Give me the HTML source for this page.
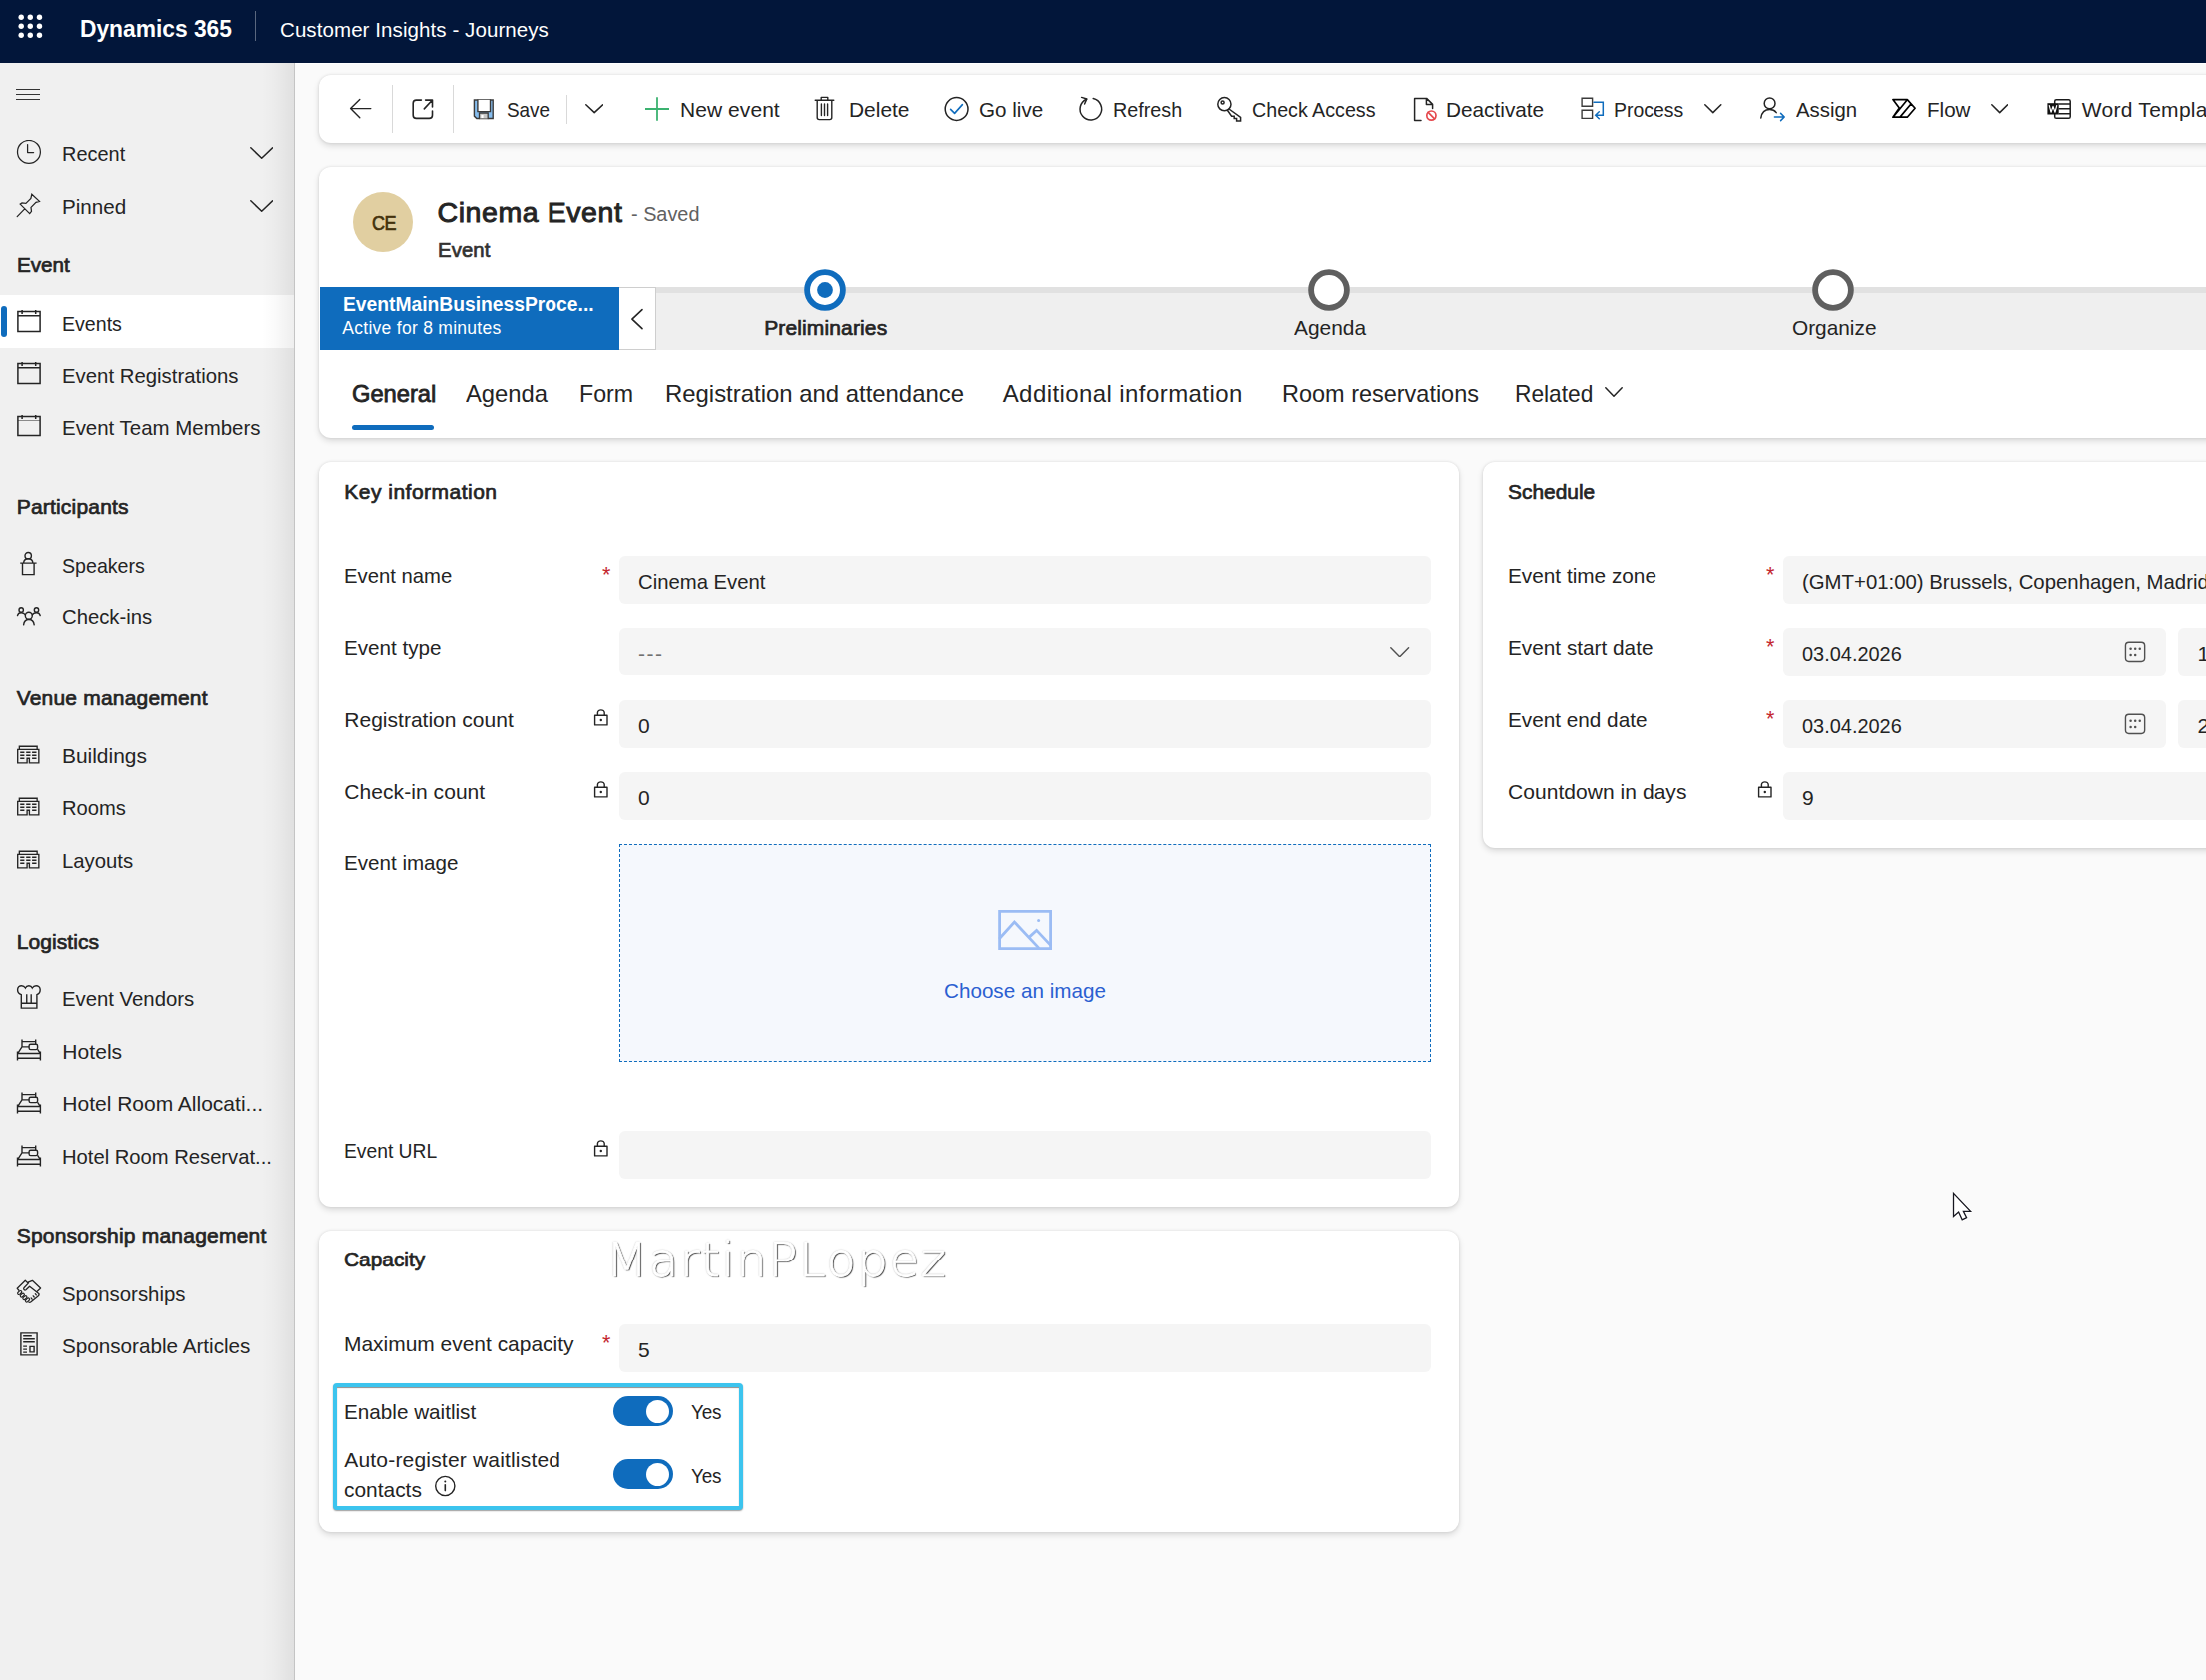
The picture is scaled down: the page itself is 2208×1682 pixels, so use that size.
<!DOCTYPE html><html lang="en"><head><meta charset="utf-8"><title>Event: Cinema Event - Dynamics 365</title><style>
*{box-sizing:border-box;margin:0;padding:0}
html,body{width:2208px;height:1682px;overflow:hidden;background:#fafafa}
body{position:relative;font-family:"Liberation Sans", sans-serif;color:#242424}
#root{position:absolute;left:0;top:0;width:2208px;height:1682px;overflow:hidden}
#root>div,#root>svg,#root>span{position:absolute}
#root>span{white-space:nowrap;line-height:1;display:block;transform-origin:0 50%}
</style></head><body><div id="root">
<div style="left:0px;top:0px;width:2208px;height:63px;background:#02163a;"></div>
<div style="left:295px;top:63px;width:1913px;height:1px;background:#fff;"></div>
<div style="left:0px;top:63px;width:294px;height:1619px;background:#f0f0f0;"></div>
<div style="left:0px;top:295px;width:294px;height:53px;background:#fff;"></div>
<div style="left:262px;top:63px;width:32px;height:1619px;background:linear-gradient(90deg,rgba(0,0,0,0),rgba(0,0,0,.02) 40%,rgba(0,0,0,.065));"></div>
<div style="left:294px;top:63px;width:1px;height:1619px;background:#c4c4c4;"></div>
<div style="left:1px;top:306px;width:6px;height:31px;background:#0f6cbd;border-radius:3px;"></div>
<svg style="left:0px;top:0px;" width="60" height="60" viewBox="0 0 60 60" fill="none" stroke-linecap="round" stroke-linejoin="round"><circle cx="21.2" cy="17.2" r="2.7" fill="#fff"/><circle cx="21.2" cy="26.2" r="2.7" fill="#fff"/><circle cx="21.2" cy="35.2" r="2.7" fill="#fff"/><circle cx="30.3" cy="17.2" r="2.7" fill="#fff"/><circle cx="30.3" cy="26.2" r="2.7" fill="#fff"/><circle cx="30.3" cy="35.2" r="2.7" fill="#fff"/><circle cx="39.5" cy="17.2" r="2.7" fill="#fff"/><circle cx="39.5" cy="26.2" r="2.7" fill="#fff"/><circle cx="39.5" cy="35.2" r="2.7" fill="#fff"/></svg>
<div style="left:255px;top:11px;width:1px;height:30px;background:rgba(255,255,255,.35);"></div>
<div style="left:15.7px;top:89px;width:24.6px;height:1px;background:#333;"></div>
<div style="left:15.7px;top:94px;width:24.6px;height:1px;background:#333;"></div>
<div style="left:15.7px;top:99px;width:24.6px;height:1px;background:#333;"></div>
<svg style="left:16px;top:140px;" width="26" height="26" viewBox="0 0 26 26" fill="none" stroke-linecap="round" stroke-linejoin="round"><circle cx="12.95" cy="11.9" r="11.45" stroke="#242424" stroke-width="1.25"/><path d="M11.6 4.6 V12.6 H17.6" stroke="#242424" stroke-width="1.25"/></svg>
<svg style="left:249.5px;top:147px;" width="23.4" height="12.2" viewBox="0 0 23.4 12.2" fill="none" stroke-linecap="round" stroke-linejoin="round"><path d="M0.8 0.8 L11.7 11.2 L22.599999999999998 0.8" stroke="#242424" stroke-width="1.5"/></svg>
<svg style="left:16px;top:193px;" width="26" height="26" viewBox="0 0 26 26" fill="none" stroke-linecap="round" stroke-linejoin="round"><path d="M4.2 11.1 L13.7 20.6 L15.5 18.4 L15 14.4 L20 9.4 L23.5 8.4 L15.8 1.3 L14.9 5.4 L9.9 10.4 L6 10 Z M8.7 15.9 L1.2 23.6" stroke="#242424" stroke-width="1.25" stroke-linejoin="miter"/></svg>
<svg style="left:249.5px;top:200px;" width="23.4" height="12.2" viewBox="0 0 23.4 12.2" fill="none" stroke-linecap="round" stroke-linejoin="round"><path d="M0.8 0.8 L11.7 11.2 L22.599999999999998 0.8" stroke="#242424" stroke-width="1.5"/></svg>
<svg style="left:16px;top:309.3px;" width="26" height="24" viewBox="0 0 26 24" fill="none" stroke-linecap="round" stroke-linejoin="round"><path d="M1.9 2.6 H24.1 V22.4 H1.9 Z M1.9 6.8 H24.1 M6.1 0.9 V5 M19.7 0.9 V5" stroke="#242424" stroke-width="1.5" stroke-linejoin="miter" stroke-linecap="butt"/></svg>
<svg style="left:16px;top:361.3px;" width="26" height="24" viewBox="0 0 26 24" fill="none" stroke-linecap="round" stroke-linejoin="round"><path d="M1.9 2.6 H24.1 V22.4 H1.9 Z M1.9 6.8 H24.1 M6.1 0.9 V5 M19.7 0.9 V5" stroke="#242424" stroke-width="1.5" stroke-linejoin="miter" stroke-linecap="butt"/></svg>
<svg style="left:16px;top:414px;" width="26" height="24" viewBox="0 0 26 24" fill="none" stroke-linecap="round" stroke-linejoin="round"><path d="M1.9 2.6 H24.1 V22.4 H1.9 Z M1.9 6.8 H24.1 M6.1 0.9 V5 M19.7 0.9 V5" stroke="#242424" stroke-width="1.5" stroke-linejoin="miter" stroke-linecap="butt"/></svg>
<svg style="left:16px;top:552px;" width="26" height="26" viewBox="0 0 26 26" fill="none" stroke-linecap="round" stroke-linejoin="round"><circle cx="12.2" cy="4.7" r="3.2" stroke="#242424" stroke-width="1.4"/><path d="M7.6 12 C7.8 9.2 9.8 7.7 12.25 7.7 C14.7 7.7 16.7 9.2 16.9 12 M4.2 12.1 H20.6 M6.5 12.1 V23.6 H18.1 V12.1" stroke="#242424" stroke-width="1.4" stroke-linejoin="miter" stroke-linecap="butt"/></svg>
<svg style="left:16px;top:604px;" width="26" height="26" viewBox="0 0 26 26" fill="none" stroke-linecap="round" stroke-linejoin="round"><circle cx="12.8" cy="12.8" r="3.5" stroke="#242424" stroke-width="1.4"/><path d="M7.6 21.8 C8 18.4 10 16.5 12.9 16.5 C15.8 16.5 17.8 18.4 18.2 21.8" stroke="#242424" stroke-width="1.4"/><circle cx="5.2" cy="7" r="2.2" stroke="#242424" stroke-width="1.4"/><circle cx="20.5" cy="7" r="2.2" stroke="#242424" stroke-width="1.4"/><path d="M1.5 12.6 C2 10.6 3.4 9.7 5.2 9.7 C7 9.7 8.6 10.6 9.4 12 M16.3 12 C17 10.6 18.6 9.7 20.5 9.7 C22.3 9.7 23.7 10.6 24.2 12.6" stroke="#242424" stroke-width="1.4"/></svg>
<svg style="left:16px;top:744.5px;" width="26" height="22" viewBox="0 0 26 22" fill="none" stroke-linecap="round" stroke-linejoin="round"><path d="M1.7 5.35 H22.85 V18.85 H13.4 V14.2 H11.1 V18.85 H1.7 Z M3.35 5 V2.25 H21.15 V5 M4.2 8.2 H8.4 M10.2 8.2 H14.5 M16.1 8.2 H20.5 M4.2 11.2 H8.4 M10.2 11.2 H14.5 M16.1 11.2 H20.5 M4.2 14.2 H8.4 M16.1 14.2 H20.5" stroke="#242424" stroke-width="1.35" stroke-linejoin="miter" stroke-linecap="butt"/></svg>
<svg style="left:16px;top:797.2px;" width="26" height="22" viewBox="0 0 26 22" fill="none" stroke-linecap="round" stroke-linejoin="round"><path d="M1.7 5.35 H22.85 V18.85 H13.4 V14.2 H11.1 V18.85 H1.7 Z M3.35 5 V2.25 H21.15 V5 M4.2 8.2 H8.4 M10.2 8.2 H14.5 M16.1 8.2 H20.5 M4.2 11.2 H8.4 M10.2 11.2 H14.5 M16.1 11.2 H20.5 M4.2 14.2 H8.4 M16.1 14.2 H20.5" stroke="#242424" stroke-width="1.35" stroke-linejoin="miter" stroke-linecap="butt"/></svg>
<svg style="left:16px;top:849.8px;" width="26" height="22" viewBox="0 0 26 22" fill="none" stroke-linecap="round" stroke-linejoin="round"><path d="M1.7 5.35 H22.85 V18.85 H13.4 V14.2 H11.1 V18.85 H1.7 Z M3.35 5 V2.25 H21.15 V5 M4.2 8.2 H8.4 M10.2 8.2 H14.5 M16.1 8.2 H20.5 M4.2 11.2 H8.4 M10.2 11.2 H14.5 M16.1 11.2 H20.5 M4.2 14.2 H8.4 M16.1 14.2 H20.5" stroke="#242424" stroke-width="1.35" stroke-linejoin="miter" stroke-linecap="butt"/></svg>
<svg style="left:16px;top:984px;" width="26" height="28" viewBox="0 0 26 28" fill="none" stroke-linecap="round" stroke-linejoin="round"><path d="M5.3 11.7 C2.6 10.9 1.6 9 1.6 6.8 C1.6 4.4 3.4 2.7 5.6 2.7 C7.2 2.7 8.6 3.6 9.4 5 C10 3.6 11.4 2.7 12.9 2.7 C14.4 2.7 15.7 3.6 16.3 5 C17.1 3.6 18.5 2.7 20.1 2.7 C22.3 2.7 24.2 4.4 24.2 6.8 C24.2 9 23.2 10.9 20.9 11.7 V25.1 H5.3 Z M5.3 20.2 H20.9 M10.75 11.2 V20.2 M15.2 11.2 V20.2" stroke="#242424" stroke-width="1.4" stroke-linejoin="miter" stroke-linecap="butt"/></svg>
<svg style="left:16px;top:1039px;" width="26" height="24" viewBox="0 0 26 24" fill="none" stroke-linecap="round" stroke-linejoin="round"><path d="M6 1.5 V8.9 L1.8 15.3 M19.7 1.5 V6.2 M6 3.6 H19.7 M6 8.9 H13.1 M21.6 11.4 L24.2 15.3 M1.5 15.5 H24.4 M1.5 20.2 H24.4 M1.5 13.4 V22.6 M24.4 13.4 V22.6" stroke="#242424" stroke-width="1.4" stroke-linejoin="miter" stroke-linecap="butt"/><rect x="13.1" y="6.2" width="8.5" height="5.4" rx="1.6" stroke="#242424" stroke-width="1.4"/></svg>
<svg style="left:16px;top:1091.5px;" width="26" height="24" viewBox="0 0 26 24" fill="none" stroke-linecap="round" stroke-linejoin="round"><path d="M6 1.5 V8.9 L1.8 15.3 M19.7 1.5 V6.2 M6 3.6 H19.7 M6 8.9 H13.1 M21.6 11.4 L24.2 15.3 M1.5 15.5 H24.4 M1.5 20.2 H24.4 M1.5 13.4 V22.6 M24.4 13.4 V22.6" stroke="#242424" stroke-width="1.4" stroke-linejoin="miter" stroke-linecap="butt"/><rect x="13.1" y="6.2" width="8.5" height="5.4" rx="1.6" stroke="#242424" stroke-width="1.4"/></svg>
<svg style="left:16px;top:1144.5px;" width="26" height="24" viewBox="0 0 26 24" fill="none" stroke-linecap="round" stroke-linejoin="round"><path d="M6 1.5 V8.9 L1.8 15.3 M19.7 1.5 V6.2 M6 3.6 H19.7 M6 8.9 H13.1 M21.6 11.4 L24.2 15.3 M1.5 15.5 H24.4 M1.5 20.2 H24.4 M1.5 13.4 V22.6 M24.4 13.4 V22.6" stroke="#242424" stroke-width="1.4" stroke-linejoin="miter" stroke-linecap="butt"/><rect x="13.1" y="6.2" width="8.5" height="5.4" rx="1.6" stroke="#242424" stroke-width="1.4"/></svg>
<svg style="left:16px;top:1280px;" width="26" height="26" viewBox="0 0 26 26" fill="none" stroke-linecap="round" stroke-linejoin="round"><path d="M2.9 12.2 L1.2 10.3 L9.3 2.3 L11.4 4.4 L16.4 2.3 L24.6 10 L21.2 13.2 M12.5 4.9 L7.9 9.8 C7 11 8.6 12.6 9.9 11.8 L13.6 8.2 L22.8 15.4 C23.4 16.6 22.8 17.6 21.8 18.2 L15 23.8 C14.2 24.4 13.4 24.4 12.8 24 M19.3 15.7 L20.3 16.9 M17.2 17.8 L18.2 19 M15.1 19.9 L16.1 21.1" stroke="#242424" stroke-width="1.3"/><rect x="1.4" y="13.2" width="4.6" height="2.6" rx="1.3" transform="rotate(-42 3.7 14.5)" stroke="#242424" stroke-width="1.2"/><rect x="4.0" y="15.8" width="4.6" height="2.6" rx="1.3" transform="rotate(-42 6.3 17.1)" stroke="#242424" stroke-width="1.2"/><rect x="6.6" y="18.3" width="4.6" height="2.6" rx="1.3" transform="rotate(-42 8.9 19.6)" stroke="#242424" stroke-width="1.2"/><rect x="9.2" y="20.7" width="4.6" height="2.6" rx="1.3" transform="rotate(-42 11.5 22)" stroke="#242424" stroke-width="1.2"/></svg>
<svg style="left:16px;top:1333px;" width="26" height="28" viewBox="0 0 26 28" fill="none" stroke-linecap="round" stroke-linejoin="round"><path d="M4.9 1.9 H21.1 V23.9 H4.9 Z M7.2 4.7 H15.8 M7.2 7.7 H18.8 M7.2 10.7 H18.8 M7.2 15.1 H11 M7.2 18.1 H11 M7.2 21.1 H11 M14 15.4 H18.1 V20.9 H14 Z" stroke="#242424" stroke-width="1.4" stroke-linejoin="miter" stroke-linecap="butt"/></svg>
<div style="left:319px;top:75px;width:1910px;height:67.5px;background:#fff;border-radius:12px;box-shadow:0 3px 6px rgba(0,0,0,.13),0 0 3px rgba(0,0,0,.11);"></div>
<div style="left:392px;top:85px;width:1px;height:48px;background:#d9d9d9;"></div>
<div style="left:453px;top:85px;width:1px;height:48px;background:#d9d9d9;"></div>
<div style="left:567px;top:94.5px;width:1px;height:29px;background:#d9d9d9;"></div>
<svg style="left:348px;top:97px;" width="26" height="24" viewBox="0 0 26 24" fill="none" stroke-linecap="round" stroke-linejoin="round"><path d="M22.8 11.6 H2.8 M11.8 2.4 L2.6 11.6 L11.8 20.8" stroke="#242424" stroke-width="1.4"/></svg>
<svg style="left:410px;top:96px;" width="26" height="26" viewBox="0 0 26 26" fill="none" stroke-linecap="round" stroke-linejoin="round"><path d="M11.4 4.1 H6.4 Q3.2 4.1 3.2 7.3 V19.2 Q3.2 22.4 6.4 22.4 H19.3 Q22.5 22.4 22.5 19.2 V15 M15.6 4.1 H22.5 V11 M22.3 4.3 L14.3 12.9" stroke="#242424" stroke-width="1.6"/></svg>
<svg style="left:471px;top:97px;" width="26" height="26" viewBox="0 0 26 26" fill="none" stroke-linecap="round" stroke-linejoin="round"><path d="M3.4 3 H22.2 V21.5 H5.8 L3.4 19.1 Z" fill="#86bdee" stroke="#3b3b3b" stroke-width="1.4" stroke-linejoin="miter"/><path d="M6.9 3 V14.6 H19.5 V3" fill="#fff" stroke="#3b3b3b" stroke-width="1.4" stroke-linejoin="miter"/><path d="M8.5 21.5 V16 H17.2 V21.5" fill="#c8c8c8" stroke="#3b3b3b" stroke-width="1.3" stroke-linejoin="miter"/><rect x="10.4" y="18" width="2.2" height="3" fill="#fff"/></svg>
<svg style="left:585.8px;top:104.4px;" width="18.4" height="9.6" viewBox="0 0 18.4 9.6" fill="none" stroke-linecap="round" stroke-linejoin="round"><path d="M0.8 0.8 L9.2 8.6 L17.599999999999998 0.8" stroke="#242424" stroke-width="1.5"/></svg>
<svg style="left:644px;top:96px;" width="28" height="26" viewBox="0 0 28 26" fill="none" stroke-linecap="round" stroke-linejoin="round"><path d="M14 1.2 V24.8 M2 13 H26" stroke="#3bb270" stroke-width="1.8" stroke-linecap="butt"/></svg>
<svg style="left:814px;top:95px;" width="24" height="28" viewBox="0 0 24 28" fill="none" stroke-linecap="round" stroke-linejoin="round"><path d="M2.2 5.2 H20.8 M8.2 5 V2.4 H14.8 V5 M4.2 5.4 V22.6 Q4.2 24.6 6.2 24.6 H16.8 Q18.8 24.6 18.8 22.6 V5.4 M8.4 9 V20.6 M11.5 9 V20.6 M14.6 9 V20.6" stroke="#242424" stroke-width="1.4"/></svg>
<svg style="left:944px;top:96px;" width="28" height="26" viewBox="0 0 28 26" fill="none" stroke-linecap="round" stroke-linejoin="round"><circle cx="13.6" cy="13" r="11.4" stroke="#242424" stroke-width="1.5"/><path d="M7.6 13.4 L11.6 17.4 L19.4 8.6" stroke="#0f6cbd" stroke-width="1.6"/></svg>
<svg style="left:1078px;top:95px;" width="28" height="28" viewBox="0 0 28 28" fill="none" stroke-linecap="round" stroke-linejoin="round"><path d="M9.6 4.2 A10.8 10.8 0 1 0 16.2 3.6" stroke="#242424" stroke-width="1.5"/><path d="M4.6 2.4 L9.8 4 L7.6 9" stroke="#242424" stroke-width="1.5"/></svg>
<svg style="left:1217px;top:96px;" width="28" height="28" viewBox="0 0 28 28" fill="none" stroke-linecap="round" stroke-linejoin="round"><circle cx="8.4" cy="8.2" r="6.6" stroke="#242424" stroke-width="1.5"/><circle cx="6.6" cy="6.4" r="1.5" stroke="#242424" stroke-width="1.5"/><path d="M13 13 L24.6 21.4 V25 H20.6 V22.6 H18.2 V20.2 H15.6 L11.4 14.2" stroke="#242424" stroke-width="1.5" stroke-linejoin="miter"/></svg>
<svg style="left:1412.5px;top:96px;" width="28" height="28" viewBox="0 0 28 28" fill="none" stroke-linecap="round" stroke-linejoin="round"><path d="M9 24.6 H2.6 V2.4 H14.6 L20.6 8.4 V12.4 M14.4 2.6 V8.6 H20.4" stroke="#242424" stroke-width="1.5"/><circle cx="19.4" cy="19.6" r="4.6" stroke="#e5484d" stroke-width="1.7"/><path d="M16.2 16.4 L22.6 22.8" stroke="#e5484d" stroke-width="1.7"/></svg>
<svg style="left:1581px;top:96px;" width="26" height="26" viewBox="0 0 26 26" fill="none" stroke-linecap="round" stroke-linejoin="round"><path d="M2.1 2.2 H12.6 V10.2 H2.1 Z M2.1 14.2 H12.6 V22.4 H2.1 Z" stroke="#3b3b3b" stroke-width="1.4" stroke-linejoin="miter"/><path d="M14 6.3 H23.3 V19.2 H15.9 M19.3 15.7 L15.7 19.2 L19.3 22.7" stroke="#0f6cbd" stroke-width="1.5" stroke-linejoin="miter"/></svg>
<svg style="left:1706.3px;top:104.4px;" width="17.6" height="9.6" viewBox="0 0 17.6 9.6" fill="none" stroke-linecap="round" stroke-linejoin="round"><path d="M0.8 0.8 L8.8 8.6 L16.8 0.8" stroke="#242424" stroke-width="1.5"/></svg>
<svg style="left:1761px;top:96px;" width="28" height="26" viewBox="0 0 28 26" fill="none" stroke-linecap="round" stroke-linejoin="round"><circle cx="10.6" cy="7.4" r="5.4" stroke="#242424" stroke-width="1.5"/><path d="M1.8 22 C2.6 16.4 6 13.6 10.6 13.6 C13.4 13.6 15.6 14.6 17.2 16.6" stroke="#242424" stroke-width="1.5"/><path d="M15.4 21 H25 M21.6 17.4 L25.2 21 L21.6 24.6" stroke="#0f6cbd" stroke-width="1.5"/></svg>
<svg style="left:1892px;top:97px;" width="28" height="24" viewBox="0 0 28 24" fill="none" stroke-linecap="round" stroke-linejoin="round"><path d="M2.9 2.6 H17.3 L25.1 11.3 L17.3 20.2 H2.9 L9.3 11.1 Z M17.3 2.8 L3.2 20 M20.8 7.2 L10.2 19.9" stroke="#000" stroke-width="1.7"/></svg>
<svg style="left:1992.7px;top:104.4px;" width="17.4" height="9.6" viewBox="0 0 17.4 9.6" fill="none" stroke-linecap="round" stroke-linejoin="round"><path d="M0.8 0.8 L8.7 8.6 L16.599999999999998 0.8" stroke="#242424" stroke-width="1.5"/></svg>
<svg style="left:2047px;top:96px;" width="28" height="26" viewBox="0 0 28 26" fill="none" stroke-linecap="round" stroke-linejoin="round"><rect x="9.7" y="3.7" width="15.5" height="18.6" rx="1.6" stroke="#1b1b1b" stroke-width="1.5"/><path d="M13.6 7.9 H25 M13.6 12.8 H25 M13.6 17.8 H25" stroke="#1b1b1b" stroke-width="1.5" stroke-linecap="butt"/><rect x="2.4" y="7.2" width="11.3" height="11.3" fill="#111"/><path d="M4.3 9.6 L6 16.2 L8 10.4 L10 16.2 L11.7 9.6" stroke="#fff" stroke-width="1.25"/></svg>
<div style="left:319px;top:167px;width:1910px;height:271.5px;background:#fff;border-radius:12px;box-shadow:0 3px 6px rgba(0,0,0,.13),0 0 3px rgba(0,0,0,.11);"></div>
<div style="left:352.5px;top:191.5px;width:60.4px;height:60.4px;background:#e1cfa1;border-radius:50%;"></div>
<div style="left:320px;top:287px;width:1900px;height:63px;background:#efefef;"></div>
<div style="left:656px;top:287px;width:1600px;height:6px;background:#e1e1e1;"></div>
<div style="left:320px;top:287px;width:300px;height:63px;background:#0f6cbd;"></div>
<div style="left:620px;top:287px;width:37px;height:63px;background:#fff;border:1px solid #cecece;border-left:0;"></div>
<svg style="left:630.5px;top:306.5px;" width="16" height="24" viewBox="0 0 16 24" fill="none" stroke-linecap="round" stroke-linejoin="round"><path d="M12 2.6 L1.9 12.1 L12 21.6" stroke="#242424" stroke-width="1.6"/></svg>
<svg style="left:805px;top:269px;" width="42" height="42" viewBox="0 0 42 42" fill="none" stroke-linecap="round" stroke-linejoin="round"><circle cx="21" cy="21" r="17.9" fill="#fff" stroke="#0f6cbd" stroke-width="5.8"/><circle cx="21" cy="21" r="7.9" fill="#0f6cbd"/></svg>
<svg style="left:1309.2px;top:269px;" width="42" height="42" viewBox="0 0 42 42" fill="none" stroke-linecap="round" stroke-linejoin="round"><circle cx="21" cy="21" r="17.9" fill="#fff" stroke="#5f5f5f" stroke-width="5.8"/></svg>
<svg style="left:1814px;top:269px;" width="42" height="42" viewBox="0 0 42 42" fill="none" stroke-linecap="round" stroke-linejoin="round"><circle cx="21" cy="21" r="17.9" fill="#fff" stroke="#5f5f5f" stroke-width="5.8"/></svg>
<div style="left:351.7px;top:425.7px;width:82.6px;height:5px;background:#0f6cbd;border-radius:2.5px;"></div>
<svg style="left:1606.3px;top:387.3px;" width="18" height="10.2" viewBox="0 0 18 10.2" fill="none" stroke-linecap="round" stroke-linejoin="round"><path d="M0.8 0.8 L9.0 9.2 L17.2 0.8" stroke="#242424" stroke-width="1.5"/></svg>
<div style="left:319px;top:462.5px;width:1141px;height:745.5px;background:#fff;border-radius:12px;box-shadow:0 3px 6px rgba(0,0,0,.13),0 0 3px rgba(0,0,0,.11);"></div>
<div style="left:620px;top:557px;width:812px;height:48px;background:#f5f5f5;border-radius:6px;"></div>
<div style="left:620px;top:629px;width:812px;height:47px;background:#f5f5f5;border-radius:6px;"></div>
<svg style="left:1391.4px;top:647.6px;" width="19.4" height="10.8" viewBox="0 0 19.4 10.8" fill="none" stroke-linecap="round" stroke-linejoin="round"><path d="M0.8 0.8 L9.7 9.8 L18.599999999999998 0.8" stroke="#505050" stroke-width="1.4"/></svg>
<div style="left:620px;top:701px;width:812px;height:48px;background:#f5f5f5;border-radius:6px;"></div>
<svg style="left:594px;top:709px;" width="16" height="20" viewBox="0 0 16 20" fill="none" stroke-linecap="round" stroke-linejoin="round"><path d="M1.6 7.2 H14 V16.9 H1.6 Z M4.4 7 V4.6 C4.4 0.9 11.2 0.9 11.2 4.6 V7" stroke="#242424" stroke-width="1.4"/><circle cx="7.8" cy="12" r="1.2" fill="#242424"/></svg>
<div style="left:620px;top:773px;width:812px;height:48px;background:#f5f5f5;border-radius:6px;"></div>
<svg style="left:594px;top:781px;" width="16" height="20" viewBox="0 0 16 20" fill="none" stroke-linecap="round" stroke-linejoin="round"><path d="M1.6 7.2 H14 V16.9 H1.6 Z M4.4 7 V4.6 C4.4 0.9 11.2 0.9 11.2 4.6 V7" stroke="#242424" stroke-width="1.4"/><circle cx="7.8" cy="12" r="1.2" fill="#242424"/></svg>
<div style="left:620px;top:845px;width:812px;height:218px;background:#f5f8fd;border:1px dashed #0f6cbd;"></div>
<svg style="left:998px;top:909px;" width="58" height="44" viewBox="0 0 58 44" fill="none" stroke-linecap="round" stroke-linejoin="round"><path d="M2.6 3.4 H53.6 V40.6 H2.6 Z" stroke="#9bbcf4" stroke-width="2.8" stroke-linejoin="miter"/><path d="M3 30 L17.4 14 L41.4 39.6 M32 29.4 L39.6 22.4 L53 36.6" stroke="#9bbcf4" stroke-width="2.8" stroke-linejoin="miter"/><circle cx="41.6" cy="12.6" r="1.5" fill="#9bbcf4"/></svg>
<div style="left:620px;top:1132px;width:812px;height:48px;background:#f5f5f5;border-radius:6px;"></div>
<svg style="left:594px;top:1140px;" width="16" height="20" viewBox="0 0 16 20" fill="none" stroke-linecap="round" stroke-linejoin="round"><path d="M1.6 7.2 H14 V16.9 H1.6 Z M4.4 7 V4.6 C4.4 0.9 11.2 0.9 11.2 4.6 V7" stroke="#242424" stroke-width="1.4"/><circle cx="7.8" cy="12" r="1.2" fill="#242424"/></svg>
<div style="left:1484px;top:462.5px;width:760px;height:386.5px;background:#fff;border-radius:12px;box-shadow:0 3px 6px rgba(0,0,0,.13),0 0 3px rgba(0,0,0,.11);"></div>
<div style="left:1785px;top:557px;width:500px;height:48px;background:#f5f5f5;border-radius:6px;"></div>
<div style="left:1785px;top:629px;width:383px;height:48px;background:#f5f5f5;border-radius:6px;"></div>
<svg style="left:2125px;top:641px;" width="24" height="24" viewBox="0 0 24 24" fill="none" stroke-linecap="round" stroke-linejoin="round"><rect x="2.45" y="2.2" width="19.2" height="19.3" rx="3.4" stroke="#505050" stroke-width="1.4"/><circle cx="7.6" cy="8.8" r="1.25" fill="#505050"/><circle cx="12.2" cy="8.8" r="1.25" fill="#505050"/><circle cx="16.75" cy="8.8" r="1.25" fill="#505050"/><circle cx="7.6" cy="15" r="1.25" fill="#505050"/><circle cx="12.2" cy="15" r="1.25" fill="#505050"/></svg>
<div style="left:2180px;top:629px;width:60px;height:48px;background:#f5f5f5;border-radius:6px;"></div>
<div style="left:1785px;top:701px;width:383px;height:48px;background:#f5f5f5;border-radius:6px;"></div>
<svg style="left:2125px;top:713px;" width="24" height="24" viewBox="0 0 24 24" fill="none" stroke-linecap="round" stroke-linejoin="round"><rect x="2.45" y="2.2" width="19.2" height="19.3" rx="3.4" stroke="#505050" stroke-width="1.4"/><circle cx="7.6" cy="8.8" r="1.25" fill="#505050"/><circle cx="12.2" cy="8.8" r="1.25" fill="#505050"/><circle cx="16.75" cy="8.8" r="1.25" fill="#505050"/><circle cx="7.6" cy="15" r="1.25" fill="#505050"/><circle cx="12.2" cy="15" r="1.25" fill="#505050"/></svg>
<div style="left:2180px;top:701px;width:60px;height:48px;background:#f5f5f5;border-radius:6px;"></div>
<div style="left:1785px;top:773px;width:500px;height:48px;background:#f5f5f5;border-radius:6px;"></div>
<svg style="left:1759.3px;top:781px;" width="16" height="20" viewBox="0 0 16 20" fill="none" stroke-linecap="round" stroke-linejoin="round"><path d="M1.6 7.2 H14 V16.9 H1.6 Z M4.4 7 V4.6 C4.4 0.9 11.2 0.9 11.2 4.6 V7" stroke="#242424" stroke-width="1.4"/><circle cx="7.8" cy="12" r="1.2" fill="#242424"/></svg>
<div style="left:319px;top:1231.5px;width:1141px;height:302.5px;background:#fff;border-radius:12px;box-shadow:0 3px 6px rgba(0,0,0,.13),0 0 3px rgba(0,0,0,.11);"></div>
<div style="left:620px;top:1326px;width:812px;height:48px;background:#f5f5f5;border-radius:6px;"></div>
<div style="left:333.3px;top:1384.5px;width:410.5px;height:127.5px;background:#fff;border:4px solid #3cc4ee;border-radius:4px;box-shadow:inset 0 1px 1px rgba(0,0,0,.45), 0 1px 1.5px rgba(0,0,0,.4);"></div>
<svg style="left:433.5px;top:1477px;" width="23" height="23" viewBox="0 0 23 23" fill="none" stroke-linecap="round" stroke-linejoin="round"><circle cx="11.3" cy="11" r="9.6" stroke="#242424" stroke-width="1.4"/><path d="M11.3 9.8 V15.6" stroke="#242424" stroke-width="1.6"/><circle cx="11.3" cy="6.6" r="1" fill="#242424"/></svg>
<div style="left:614px;top:1398px;width:60px;height:30px;background:#0f6cbd;border-radius:15px;"></div>
<div style="left:647px;top:1401.5px;width:23px;height:23px;background:#fff;border-radius:50%;"></div>
<div style="left:614px;top:1461px;width:60px;height:30px;background:#0f6cbd;border-radius:15px;"></div>
<div style="left:647px;top:1464.5px;width:23px;height:23px;background:#fff;border-radius:50%;"></div>
<span style="left:79.7px;top:17.63px;font-size:23px;color:#fff;font-weight:700;transform:scaleX(0.9900);">Dynamics 365</span>
<span style="left:280px;top:19.95px;font-size:20.5px;color:#fff;letter-spacing:0.083px;">Customer Insights - Journeys</span>
<span style="left:62.3px;top:143.12px;font-size:21px;color:#242424;transform:scaleX(0.9493);">Recent</span>
<span style="left:62.3px;top:195.82px;font-size:21px;color:#242424;transform:scaleX(0.9813);">Pinned</span>
<span style="left:16.7px;top:253.82px;font-size:21px;color:#242424;-webkit-text-stroke:0.71px #242424;transform:scaleX(0.9826);">Event</span>
<span style="left:62.3px;top:313.12px;font-size:21px;color:#242424;transform:scaleX(0.9325);">Events</span>
<span style="left:62.3px;top:365.12px;font-size:21px;color:#242424;transform:scaleX(0.9691);">Event Registrations</span>
<span style="left:62.3px;top:417.82px;font-size:21px;color:#242424;transform:scaleX(0.9736);">Event Team Members</span>
<span style="left:16.7px;top:497.12px;font-size:21px;color:#242424;-webkit-text-stroke:0.71px #242424;letter-spacing:0.196px;">Participants</span>
<span style="left:62.3px;top:555.52px;font-size:21px;color:#242424;transform:scaleX(0.9341);">Speakers</span>
<span style="left:62.3px;top:607.22px;font-size:21px;color:#242424;transform:scaleX(0.9657);">Check-ins</span>
<span style="left:16.7px;top:687.92px;font-size:21px;color:#242424;-webkit-text-stroke:0.71px #242424;letter-spacing:0.193px;">Venue management</span>
<span style="left:62.3px;top:745.52px;font-size:21px;color:#242424;transform:scaleX(0.9957);">Buildings</span>
<span style="left:62.3px;top:798.22px;font-size:21px;color:#242424;transform:scaleX(0.9600);">Rooms</span>
<span style="left:62.3px;top:850.52px;font-size:21px;color:#242424;transform:scaleX(0.9675);">Layouts</span>
<span style="left:16.7px;top:931.52px;font-size:21px;color:#242424;-webkit-text-stroke:0.71px #242424;letter-spacing:0.085px;">Logistics</span>
<span style="left:62.3px;top:988.92px;font-size:21px;color:#242424;transform:scaleX(0.9676);">Event Vendors</span>
<span style="left:62.3px;top:1041.52px;font-size:21px;color:#242424;letter-spacing:0.056px;">Hotels</span>
<span style="left:62.3px;top:1093.92px;font-size:21px;color:#242424;">Hotel Room Allocati...</span>
<span style="left:62.3px;top:1147.22px;font-size:21px;color:#242424;transform:scaleX(0.9616);">Hotel Room Reservat...</span>
<span style="left:16.7px;top:1225.52px;font-size:21px;color:#242424;-webkit-text-stroke:0.71px #242424;letter-spacing:0.210px;">Sponsorship management</span>
<span style="left:62.3px;top:1284.92px;font-size:21px;color:#242424;transform:scaleX(0.9703);">Sponsorships</span>
<span style="left:62.3px;top:1336.52px;font-size:21px;color:#242424;transform:scaleX(0.9844);">Sponsorable Articles</span>
<span style="left:506.7px;top:98.92px;font-size:21px;color:#242424;transform:scaleX(0.9000);">Save</span>
<span style="left:681px;top:98.92px;font-size:21px;color:#242424;letter-spacing:0.061px;">New event</span>
<span style="left:850.3px;top:98.92px;font-size:21px;color:#242424;transform:scaleX(0.9962);">Delete</span>
<span style="left:980.3px;top:98.92px;font-size:21px;color:#242424;transform:scaleX(0.9818);">Go live</span>
<span style="left:1114.3px;top:98.92px;font-size:21px;color:#242424;transform:scaleX(0.9407);">Refresh</span>
<span style="left:1253.3px;top:98.92px;font-size:21px;color:#242424;transform:scaleX(0.9362);">Check Access</span>
<span style="left:1447px;top:98.92px;font-size:21px;color:#242424;transform:scaleX(0.9894);">Deactivate</span>
<span style="left:1615.3px;top:98.92px;font-size:21px;color:#242424;transform:scaleX(0.9250);">Process</span>
<span style="left:1797.7px;top:98.92px;font-size:21px;color:#242424;transform:scaleX(0.9689);">Assign</span>
<span style="left:1928.7px;top:98.92px;font-size:21px;color:#242424;transform:scaleX(0.9803);">Flow</span>
<span style="left:2083.7px;top:98.92px;font-size:21px;color:#242424;letter-spacing:0.286px;">Word Templates</span>
<span style="left:371.5px;top:213.47px;font-size:20px;color:#43320c;-webkit-text-stroke:0.68px #43320c;letter-spacing:-0.454px;transform:scaleX(0.9000);">CE</span>
<span style="left:437.5px;top:197.67px;font-size:28.5px;color:#242424;-webkit-text-stroke:0.97px #242424;letter-spacing:0.582px;">Cinema Event</span>
<span style="left:632.3px;top:204.45px;font-size:20.5px;color:#616161;transform:scaleX(0.9686);">- Saved</span>
<span style="left:438px;top:239.62px;font-size:20.3px;color:#323130;-webkit-text-stroke:0.69px #323130;letter-spacing:0.109px;">Event</span>
<span style="left:342.7px;top:293.67px;font-size:20px;color:#fff;font-weight:700;transform:scaleX(0.9632);">EventMainBusinessProce...</span>
<span style="left:342.3px;top:319.79px;font-size:17.5px;color:#fff;letter-spacing:0.278px;">Active for 8 minutes</span>
<span style="left:765.15px;top:317.32px;font-size:21px;color:#242424;-webkit-text-stroke:0.71px #242424;letter-spacing:0.138px;">Preliminaries</span>
<span style="left:1294.9px;top:317.32px;font-size:21px;color:#242424;transform:scaleX(0.9954);">Agenda</span>
<span style="left:1793.5px;top:317.32px;font-size:21px;color:#242424;transform:scaleX(0.9912);">Organize</span>
<span style="left:351.7px;top:382.18px;font-size:24px;color:#242424;-webkit-text-stroke:0.82px #242424;transform:scaleX(0.9870);">General</span>
<span style="left:465.7px;top:382.18px;font-size:24px;color:#242424;transform:scaleX(0.9907);">Agenda</span>
<span style="left:580.3px;top:382.18px;font-size:24px;color:#242424;transform:scaleX(0.9657);">Form</span>
<span style="left:666px;top:382.18px;font-size:24px;color:#242424;transform:scaleX(0.9959);">Registration and attendance</span>
<span style="left:1003.7px;top:382.18px;font-size:24px;color:#242424;letter-spacing:0.417px;">Additional information</span>
<span style="left:1282.7px;top:382.18px;font-size:24px;color:#242424;transform:scaleX(0.9779);">Room reservations</span>
<span style="left:1516.3px;top:382.18px;font-size:24px;color:#242424;transform:scaleX(0.9474);">Related</span>
<span style="left:344.3px;top:481.62px;font-size:21px;color:#242424;-webkit-text-stroke:0.71px #242424;letter-spacing:0.484px;">Key information</span>
<span style="left:344.3px;top:566.02px;font-size:21px;color:#242424;transform:scaleX(0.9651);">Event name</span>
<span style="left:639px;top:572.02px;font-size:21px;color:#242424;transform:scaleX(0.9664);">Cinema Event</span>
<span style="left:603.1px;top:565.80px;font-size:21.5px;color:#c4262e;">*</span>
<span style="left:344.3px;top:638.02px;font-size:21px;color:#242424;transform:scaleX(0.9822);">Event type</span>
<span style="left:639px;top:644.02px;font-size:21px;color:#707070;letter-spacing:1.495px;">---</span>
<span style="left:344.3px;top:710.02px;font-size:21px;color:#242424;letter-spacing:0.011px;">Registration count</span>
<span style="left:639px;top:716.02px;font-size:21px;color:#242424;">0</span>
<span style="left:344.3px;top:782.02px;font-size:21px;color:#242424;letter-spacing:0.064px;">Check-in count</span>
<span style="left:639px;top:788.02px;font-size:21px;color:#242424;">0</span>
<span style="left:344.3px;top:853.42px;font-size:21px;color:#242424;transform:scaleX(0.9806);">Event image</span>
<span style="left:945.4px;top:980.62px;font-size:21px;color:#2b5fd1;transform:scaleX(0.9834);">Choose an image</span>
<span style="left:344.3px;top:1141.02px;font-size:21px;color:#242424;transform:scaleX(0.9175);">Event URL</span>
<span style="left:1509px;top:481.52px;font-size:21px;color:#242424;-webkit-text-stroke:0.71px #242424;transform:scaleX(0.9953);">Schedule</span>
<span style="left:1509px;top:566.02px;font-size:21px;color:#242424;transform:scaleX(0.9892);">Event time zone</span>
<span style="left:1804px;top:572.02px;font-size:21px;color:#242424;transform:scaleX(0.9694);">(GMT+01:00) Brussels, Copenhagen, Madrid, Paris</span>
<span style="left:1768.1px;top:565.80px;font-size:21.5px;color:#c4262e;">*</span>
<span style="left:1509px;top:638.02px;font-size:21px;color:#242424;transform:scaleX(0.9890);">Event start date</span>
<span style="left:1804px;top:644.02px;font-size:21px;color:#242424;transform:scaleX(0.9492);">03.04.2026</span>
<span style="left:1768.1px;top:637.80px;font-size:21.5px;color:#c4262e;">*</span>
<span style="left:2199.5px;top:644.02px;font-size:21px;color:#242424;">13:00</span>
<span style="left:1509px;top:710.02px;font-size:21px;color:#242424;transform:scaleX(0.9872);">Event end date</span>
<span style="left:1804px;top:716.02px;font-size:21px;color:#242424;transform:scaleX(0.9492);">03.04.2026</span>
<span style="left:1768.1px;top:709.80px;font-size:21.5px;color:#c4262e;">*</span>
<span style="left:2199.5px;top:716.02px;font-size:21px;color:#242424;">22:00</span>
<span style="left:1509px;top:782.02px;font-size:21px;color:#242424;letter-spacing:0.050px;">Countdown in days</span>
<span style="left:1804px;top:788.02px;font-size:21px;color:#242424;">9</span>
<span style="left:344.3px;top:1250.02px;font-size:21px;color:#242424;-webkit-text-stroke:0.71px #242424;transform:scaleX(0.9935);">Capacity</span>
<span style="left:606.5px;top:1237.04px;font-size:48.5px;color:#fff;letter-spacing:1.331px;font-family:'DejaVu Sans',sans-serif;font-weight:200;-webkit-text-stroke:0.8px #fff;text-shadow:1.2px 1.2px 1px rgba(0,0,0,.7),0 0 1.5px rgba(0,0,0,.55);">MartinPLopez</span>
<span style="left:344.3px;top:1335.02px;font-size:21px;color:#242424;transform:scaleX(0.9973);">Maximum event capacity</span>
<span style="left:639px;top:1341.02px;font-size:21px;color:#242424;">5</span>
<span style="left:603.1px;top:1334.80px;font-size:21.5px;color:#c4262e;">*</span>
<span style="left:344.3px;top:1403.22px;font-size:21px;color:#242424;transform:scaleX(0.9846);">Enable waitlist</span>
<span style="left:344.3px;top:1451.32px;font-size:21px;color:#242424;letter-spacing:0.185px;">Auto-register waitlisted</span>
<span style="left:344.3px;top:1481.22px;font-size:21px;color:#242424;transform:scaleX(0.9955);">contacts</span>
<span style="left:692.3px;top:1403.22px;font-size:21px;color:#242424;letter-spacing:-0.248px;transform:scaleX(0.9000);">Yes</span>
<span style="left:692.3px;top:1466.52px;font-size:21px;color:#242424;letter-spacing:-0.248px;transform:scaleX(0.9000);">Yes</span>
<svg style="left:1950px;top:1190px;" width="28" height="36" viewBox="0 0 28 36" fill="none" stroke-linecap="round" stroke-linejoin="round"><path d="M5.5 4.3 V27.5 L10.6 23 L14.2 30.8 L18.6 28.7 L15.4 22.4 L22.6 22.3 Z" fill="#fff" stroke="#fff" stroke-width="3.2" stroke-linejoin="round"/><path d="M5.5 4.3 V27.5 L10.6 23 L14.2 30.8 L18.6 28.7 L15.4 22.4 L22.6 22.3 Z" fill="#fff" stroke="#16161f" stroke-width="1.3" stroke-linejoin="miter"/></svg>
</div></body></html>
